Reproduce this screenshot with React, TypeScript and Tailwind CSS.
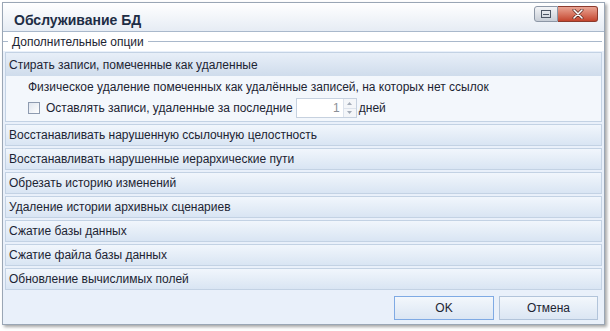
import React from 'react';

const sections = [
  'Восстанавливать нарушенную ссылочную целостность',
  'Восстанавливать нарушенные иерархические пути',
  'Обрезать историю изменений',
  'Удаление истории архивных сценариев',
  'Сжатие базы данных',
  'Сжатие файла базы данных',
  'Обновление вычислимых полей',
];

const Bar: React.FC<{ label: string }> = ({ label }) => (
  <div className="h-[22px] flex items-center px-[3px] border border-[#c3d2e4] bg-gradient-to-b from-[#f1f6fc] to-[#d9e5f3] text-[#1c2433] whitespace-nowrap">
    {label}
  </div>
);

export default function App() {
  return (
    <div className="w-[610px] h-[331px] bg-white overflow-hidden" style={{ fontFamily: '"Liberation Sans", Arial, sans-serif' }}>
      <div className="ml-[2px] mt-[2px] w-[603px] h-[323px] border border-[#9aa6b5] bg-[#e9f0fa] shadow-[2px_2px_3px_rgba(0,0,0,0.35)] flex flex-col text-[12px]">
        {/* title bar */}
        <div className="h-[29px] shrink-0 flex items-start justify-between bg-gradient-to-b from-[#ffffff] to-[#e6ecf4] border-b border-[#a9b8cb]">
          <div className="pl-[11px] pt-[8px] font-bold text-[14px] leading-[18px] text-[#1e2d45]">Обслуживание БД</div>
          <div className="flex mt-[3px] mr-[6px]">
            <div className="w-[24px] h-[16px] border border-[#8d97a6] rounded-l-[3px] bg-gradient-to-b from-[#f4f5f7] to-[#c8ced7] flex items-center justify-center">
              <div className="w-[10px] h-[8px] border border-[#4c5563] flex items-center justify-center">
                <div className="w-[6px] h-px bg-[#4c5563]" />
              </div>
            </div>
            <div className="w-[40px] h-[16px] border border-[#8c3a2c] border-l-0 rounded-r-[3px] bg-gradient-to-b from-[#e9a493] to-[#c3432c] flex items-center justify-center">
              <svg width="12" height="10" viewBox="0 0 12 10">
                <path d="M2 1 L10 9 M10 1 L2 9" stroke="#5b2a22" strokeWidth="3" strokeLinecap="round" />
                <path d="M2 1 L10 9 M10 1 L2 9" stroke="#ffffff" strokeWidth="1.6" strokeLinecap="round" />
              </svg>
            </div>
          </div>
        </div>

        {/* group legend */}
        <div className="h-[19px] shrink-0 bg-white flex items-center text-[#1c2433]">
          <div className="w-[5px] h-px bg-[#a9b8cb]" />
          <span className="px-[4px]">Дополнительные опции</span>
          <div className="flex-1 h-px bg-[#a9b8cb] mr-[2px]" />
        </div>

        {/* sections */}
        <div className="flex-1 flex flex-col px-[2px] pt-px">
          <div className="border border-[#c3d2e4] bg-[#f3f7fc]">
            <div className="h-[23px] flex items-center px-[3px] bg-gradient-to-b from-[#e8eff8] to-[#cfdcec] text-[#1c2433]">
              Стирать записи, помеченные как удаленные
            </div>
            <div className="pl-[22px] pt-[2px] pb-[2px] text-[#1c2433]">
              <div className="h-[18px] flex items-center">
                Физическое удаление помеченных как удалённые записей, на которых нет ссылок
              </div>
              <div className="h-[22px] flex items-center mt-px">
                <div className="w-[12px] h-[12px] border border-[#8e9bb0] bg-gradient-to-br from-[#dfe5ee] to-[#ffffff] mr-[6px]" />
                <span>Оставлять записи, удаленные за последние</span>
                <div className="ml-[3px] w-[61px] h-[20px] border border-[#c6d1df] bg-white flex">
                  <div className="flex-1 flex items-center justify-end pr-[3px] text-[#8a8f97]">1</div>
                  <div className="w-[13px] flex flex-col border-l border-[#dde3ec]">
                    <div className="flex-1 flex items-center justify-center border-b border-[#dde3ec] bg-[#f4f6f9]">
                      <svg width="5" height="3" viewBox="0 0 5 3"><path d="M0 3 L2.5 0 L5 3 Z" fill="#a4acb8" /></svg>
                    </div>
                    <div className="flex-1 flex items-center justify-center bg-[#f4f6f9]">
                      <svg width="5" height="3" viewBox="0 0 5 3"><path d="M0 0 L2.5 3 L5 0 Z" fill="#a4acb8" /></svg>
                    </div>
                  </div>
                </div>
                <span className="ml-[2px]">дней</span>
              </div>
            </div>
          </div>
          <div className="flex flex-col gap-[2px] mt-[2px]">
            {sections.map(s => (
              <Bar key={s} label={s} />
            ))}
          </div>
          <div className="flex justify-end gap-[5px] mt-[6px] pr-[4px]">
            <button className="w-[100px] h-[24px] border border-[#7faae4] bg-gradient-to-b from-[#f3f7fc] to-[#dbe6f3] text-[#1c2433]">OK</button>
            <button className="w-[99px] h-[24px] border border-[#b2c4da] bg-gradient-to-b from-[#f3f7fc] to-[#dbe6f3] text-[#1c2433]">Отмена</button>
          </div>
        </div>
      </div>
    </div>
  );
}
